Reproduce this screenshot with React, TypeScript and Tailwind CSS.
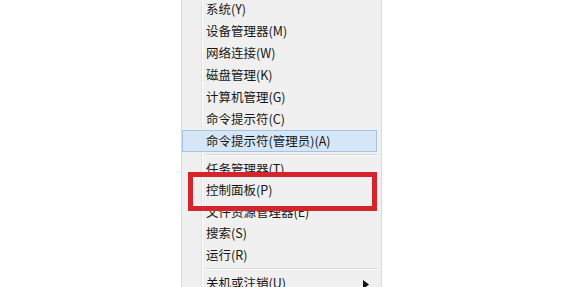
import React from "react";

type Row = { label: string };

const top: Row[] = [
  { label: "系统(Y)" },
  { label: "设备管理器(M)" },
  { label: "网络连接(W)" },
  { label: "磁盘管理(K)" },
  { label: "计算机管理(G)" },
  { label: "命令提示符(C)" },
];

const mid: Row[] = [
  { label: "任务管理器(T)" },
  { label: "控制面板(P)" },
  { label: "文件资源管理器(E)" },
  { label: "搜索(S)" },
  { label: "运行(R)" },
];

function Item({ label, className }: { label: string; className: string }) {
  return (
    <div className={`flex items-center pl-[24px] text-[12.5px] text-[#161616] whitespace-nowrap ${className}`}>
      {label}
    </div>
  );
}

function Separator() {
  return (
    <div className="h-[6.5px] flex flex-col justify-center pl-[24px] pr-[4px]">
      <div className="h-px bg-[#d6d6d6]" />
      <div className="h-px bg-white" />
    </div>
  );
}

export default function App() {
  return (
    <div
      className="w-[578px] h-[287px] bg-white overflow-hidden relative"
      style={{ fontFamily: '"Noto Sans CJK SC", "Noto Sans", sans-serif' }}
    >
      <div className="ml-[181px] w-[201px] h-[300px] -mt-[2px] bg-[#f0f0f0] border-l border-r border-[#dadada] relative">
        <div className="absolute left-[19px] top-0 bottom-0 w-px bg-[#e0e0e0]" />
        <div className="absolute left-[20px] top-0 bottom-0 w-px bg-white" />
        <div className="relative">
          {top.map((r) => (
            <Item key={r.label} label={r.label} className="h-[22px]" />
          ))}
          <div className="h-[22px] mr-[4px] bg-[#d5e6f6] border border-[#a3c4e4] flex items-center pl-[23px] text-[12.5px] text-[#161616] whitespace-nowrap">
            命令提示符(管理员)(A)
          </div>
          <Separator />
          {mid.map((r) => (
            <Item key={r.label} label={r.label} className="h-[21.5px]" />
          ))}
          <Separator />
          <div className="h-[22px] flex items-center pl-[24px] pr-[12px] justify-between text-[12.5px] text-[#161616] whitespace-nowrap">
            <span>关机或注销(U)</span>
            <svg width="6" height="9" viewBox="0 0 6 9" className="mt-[2px]">
              <path d="M0 0 L6 4.5 L0 9 Z" fill="#111" />
            </svg>
          </div>
        </div>
      </div>
      <div className="absolute left-[188px] top-[172px] w-[189px] h-[39px] border-[5px] border-[#d4242c]" />
    </div>
  );
}
